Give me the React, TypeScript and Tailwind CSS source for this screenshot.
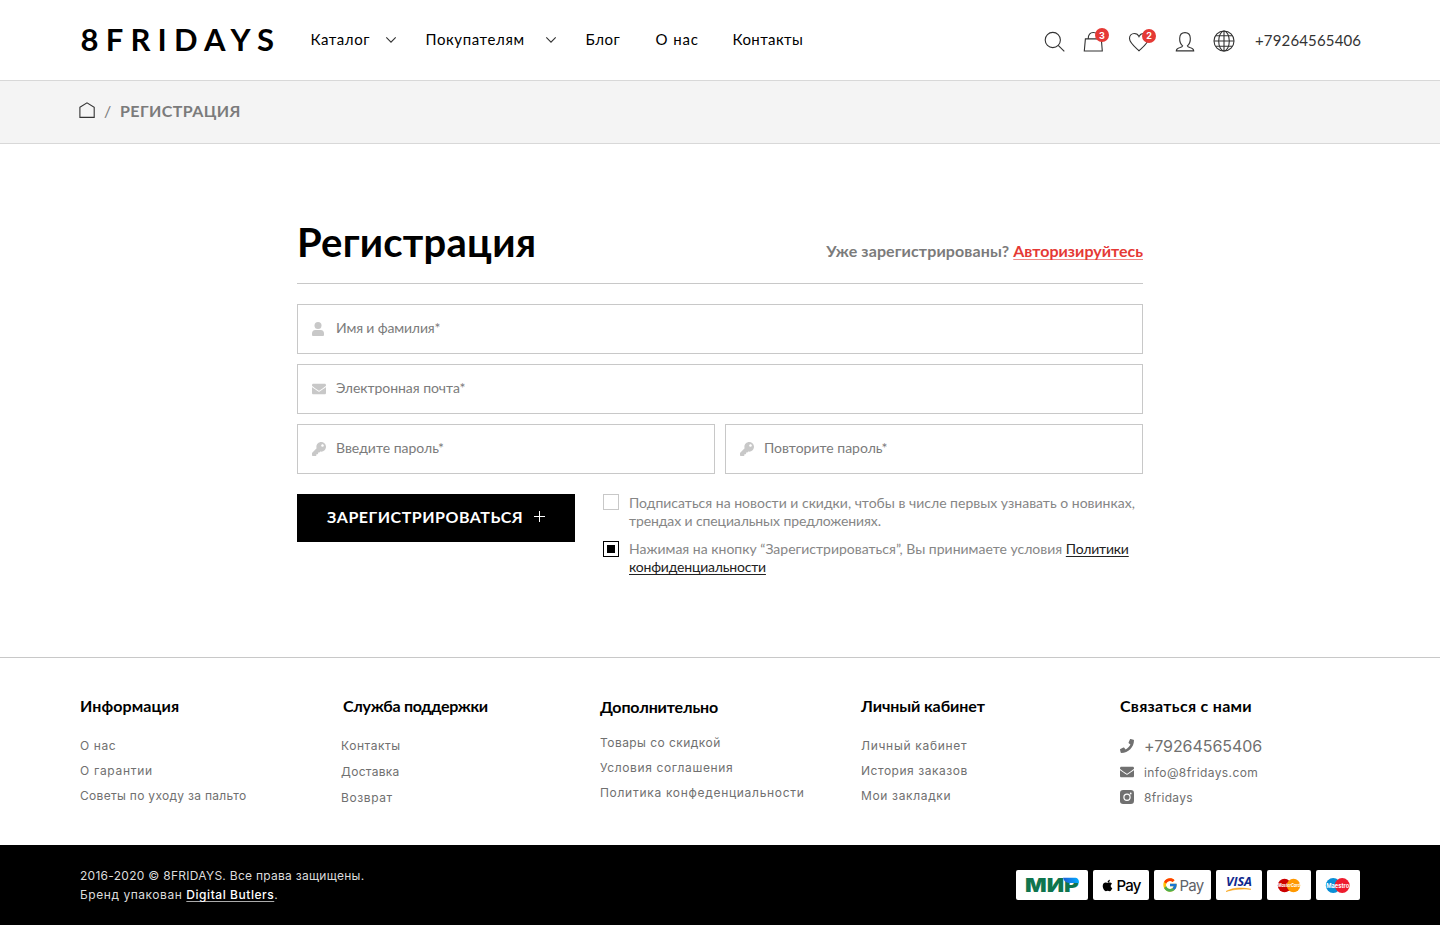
import type { ReactNode } from 'react';
import { FaApple, FaEnvelope, FaKey, FaPhone } from 'react-icons/fa';
import { FcGoogle } from 'react-icons/fc';

function Chevron() {
  return (
    <svg width="12" height="8" viewBox="0 0 12 8" fill="none" stroke="#333" strokeWidth="1.1">
      <path d="M1.3 1.3 6 6.2 10.7 1.3" />
    </svg>
  );
}

function SearchIcon() {
  return (
    <svg width="22" height="22" viewBox="0 0 22 22" fill="none" stroke="#333" strokeWidth="1.1">
      <circle cx="8.8" cy="9" r="7.6" />
      <path d="M14.2 14.4 20.3 20.3" />
    </svg>
  );
}

function BagIcon() {
  return (
    <svg width="22" height="22" viewBox="0 0 22 22" fill="none" stroke="#333" strokeWidth="1.1">
      <path d="M2.400 7.900h15.900l1 12.100H1.300z" />
      <path d="M5.200 7.900C5.200 3.600 7.100 1.500 10.300 1.500s5.100 2.100 5.100 6.400" />
    </svg>
  );
}

function HeartIcon() {
  return (
    <svg width="22" height="22" viewBox="0 0 22 22" fill="none" stroke="#333" strokeWidth="1.1">
      <path d="M11 19.800C7.500 16.600 1.500 12 1.500 7.600 1.500 4.700 3.600 2.500 6.300 2.500 8.400 2.500 10.200 3.700 11 5.600 11.800 3.700 13.600 2.500 15.700 2.500c2.700 0 4.800 2.200 4.800 5.100C20.500 12 14.500 16.600 11 19.800z" />
    </svg>
  );
}

function ProfileIcon() {
  return (
    <svg width="22" height="22" viewBox="0 0 22 22" fill="none" stroke="#333" strokeWidth="1.1">
      <path d="M8.600 14.800C6.700 13.200 5.500 10.400 5.700 7.200 5.800 3.600 7.800 1.600 11 1.600s5.200 2 5.300 5.600c.2 3.200-1 6-2.900 7.600.3.900 1.200 1.300 2.500 1.700 2.300.6 3.700 1.300 3.800 3.400H2.300c.1-2.100 1.500-2.800 3.800-3.400 1.300-.4 2.200-.8 2.500-1.700z" />
    </svg>
  );
}

function GlobeIcon() {
  return (
    <svg width="22" height="22" viewBox="0 0 22 22" fill="none" stroke="#333" strokeWidth="1.1">
      <circle cx="11" cy="11" r="10" />
      <ellipse cx="11" cy="11" rx="5.3" ry="10" />
      <path d="M11 1v20M1 11h20M2.500 5.800h17M2.500 16.200h17" />
    </svg>
  );
}

function HomeIcon() {
  return (
    <svg width="16" height="17" viewBox="0 0 16 17" fill="none" stroke="#333" strokeWidth="1.1">
      <path d="M.9 5.300 8 .900 15.200 5.300V15.400H.9z" />
    </svg>
  );
}

function UserGlyph() {
  return (
    <svg width="12" height="14" viewBox="0 0 12 14" fill="currentColor">
      <circle cx="6" cy="3.5" r="3.5" />
      <path d="M3.200 8h5.600C10.700 8 12 9.300 12 11.200v1.500c0 .8-.5 1.300-1.300 1.300H1.300C.5 14 0 13.500 0 12.700v-1.500C0 9.300 1.300 8 3.200 8z" />
    </svg>
  );
}

function InstagramGlyph() {
  return (
    <svg width="14" height="14" viewBox="0 0 14 14">
      <rect width="14" height="14" rx="3.2" fill="#707070" />
      <circle cx="7" cy="7.2" r="3.1" fill="none" stroke="#fff" strokeWidth="1.2" />
      <circle cx="10.7" cy="3.5" r="0.9" fill="#fff" />
    </svg>
  );
}

function Badge({ children }: { children: ReactNode }) {
  return (
    <span className="flex h-[14px] w-[14px] items-center justify-center rounded-full bg-[#e53935] font-['Inter',sans-serif] text-[9px] leading-none font-bold text-white">
      {children}
    </span>
  );
}

function Field({ icon, label }: { icon: ReactNode; label: ReactNode }) {
  return (
    <div className="flex h-[50px] items-center border border-[#c8c8c8] pl-[14px] text-[14px] leading-[18px] text-[#7b7b7b]">
      <span className="flex w-6 text-[#c8c8c8]">{icon}</span>
      <span className="pb-[2px]">{label}</span>
    </div>
  );
}

function Card({ width, children }: { width: string; children: ReactNode }) {
  return <div className={`flex h-[30px] items-center justify-center rounded-[2px] bg-white ${width}`}>{children}</div>;
}

const underlined = 'underline decoration-1 underline-offset-[2px] [text-decoration-skip-ink:none]';

export default function App() {
  return (
    <div className="flex h-[925px] w-[1440px] flex-col bg-white font-['Lato',sans-serif] text-black">
      <header className="flex h-[81px] items-start border-b border-[#d8d8d8] pl-[80.5px] whitespace-nowrap">
        <a className="mt-[20px] w-[230px] text-[31px] leading-[38px] font-bold tracking-[7.2px]">8FRIDAYS</a>
        <nav className="mt-[29px] flex h-5 items-center text-[15px] leading-5">
          <a className="w-[74.5px] tracking-[0.55px]">Каталог</a>
          <span className="w-[40.5px] pt-[2px]"><Chevron /></span>
          <a className="w-[119.5px] tracking-[0.6px]">Покупателям</a>
          <span className="w-[40.5px] pt-[2px]"><Chevron /></span>
          <a className="w-[70px] tracking-[0.55px]">Блог</a>
          <a className="w-[77px] tracking-[0.9px]">О нас</a>
          <a className="w-[311.5px] tracking-[0.4px]">Контакты</a>
        </nav>
        <div className="mt-[30px] flex h-[22px] items-center text-[#333]">
          <span className="mt-[2px] w-[39px]"><SearchIcon /></span>
          <span className="relative mt-[2px] w-[45px]"><BagIcon /><span className="absolute -top-[3px] left-[12px]"><Badge>3</Badge></span></span>
          <span className="relative mt-[2px] w-[46px]"><HeartIcon /><span className="absolute -top-[2.5px] left-[14px]"><Badge>2</Badge></span></span>
          <span className="mt-[2px] w-[39px]"><ProfileIcon /></span>
          <span className="w-[42px]"><GlobeIcon /></span>
          <span className="pb-px text-[15px] tracking-[0.15px]">+79264565406</span>
        </div>
      </header>

      <div className="flex h-[63px] items-center border-b border-[#d8d8d8] bg-[#f4f4f4] pl-[79px] text-[16px] leading-5 text-[#7b7b7b]">
        <span className="mb-[3px] w-[25px]"><HomeIcon /></span>
        <span className="mb-[2px] w-[16px]">/</span>
        <span className="mb-[2px] font-bold tracking-[0.4px]">РЕГИСТРАЦИЯ</span>
      </div>

      <main className="flex h-[514px] flex-col border-b border-[#c8c8c8] px-[297px] pt-[74px]">
        <div className="flex h-[66px] items-baseline justify-between border-b border-[#c8c8c8]">
          <h1 className="text-[40px] leading-[48px] font-bold tracking-[0.25px]">Регистрация</h1>
          <p className="mb-px pb-px text-[16px] font-bold tracking-[0.12px] text-[#7b7b7b]">
            Уже зарегистрированы?{' '}
            <a className={`tracking-normal text-[#e53935] decoration-[#f08a88] ${underlined}`}>Авторизируйтесь</a>
          </p>
        </div>
        <form className="mt-5 flex flex-col gap-[10px]">
          <Field icon={<UserGlyph />} label={<span className="tracking-[-0.15px]">Имя и фамилия*</span>} />
          <Field icon={<FaEnvelope size={14} />} label={<span className="tracking-[-0.05px]">Электронная почта*</span>} />
          <div className="grid grid-cols-2 gap-[10px]">
            <Field icon={<FaKey size={14} />} label="Введите пароль*" />
            <Field icon={<FaKey size={14} />} label="Повторите пароль*" />
          </div>
        </form>
        <div className="mt-5 flex">
          <button className="flex h-12 w-[278px] items-center bg-black pl-[30px] text-[16px] font-bold whitespace-nowrap text-white">
            <span className="w-[207px] pb-[2px] text-left tracking-[0.52px]">ЗАРЕГИСТРИРОВАТЬСЯ</span>
            <svg width="11" height="11" viewBox="0 0 11 11" stroke="#fff" className="mb-[3px]">
              <path d="M5.5 0v11M0 5.5h11" />
            </svg>
          </button>
          <div className="ml-7 flex flex-col gap-[10px] text-[14px] leading-[18px] whitespace-nowrap text-[#868686]">
            <div className="flex gap-[10px]">
              <span className="h-4 w-4 border border-[#c8c8c8]" />
              <p>
                Подписаться на новости и скидки, чтобы в числе первых узнавать о новинках,<br />
                <span className="tracking-[-0.11px]">трендах и специальных предложениях.</span>
              </p>
            </div>
            <div className="flex gap-[10px]">
              <span className="mt-px flex h-4 w-4 items-center justify-center border border-black">
                <span className="h-2 w-2 bg-black" />
              </span>
              <p>
                Нажимая на кнопку “Зарегистрироваться”, Вы принимаете условия{' '}
                <a className={`tracking-[-0.2px] text-[#222] ${underlined}`}>Политики<br />конфиденциальности</a>
              </p>
            </div>
          </div>
        </div>
      </main>

      <footer className="flex h-[187px] pt-[38px] pl-[80px] text-[16px] leading-5 font-bold whitespace-nowrap">
        <section className="w-[261px]">
          <h2 className="tracking-[0.1px]">Информация</h2>
          <ul className="mt-[17px] font-['Inter',sans-serif] text-[12px] leading-[25px] font-normal text-[#707070]">
            <li className="tracking-[0.6px]">О нас</li>
            <li className="tracking-[0.7px]">О гарантии</li>
            <li className="tracking-[0.3px]">Советы по уходу за пальто</li>
          </ul>
        </section>
        <section className="w-[259px]">
          <h2 className="pl-[2px] tracking-[-0.3px]">Служба поддержки</h2>
          <ul className="mt-[17px] font-['Inter',sans-serif] text-[12px] leading-[26px] font-normal text-[#707070]">
            <li className="tracking-[0.55px]">Контакты</li>
            <li className="tracking-[0.3px]">Доставка</li>
            <li className="tracking-[0.6px]">Возврат</li>
          </ul>
        </section>
        <section className="w-[261px] pt-px">
          <h2 className="tracking-[-0.15px]">Дополнительно</h2>
          <ul className="mt-[13px] font-['Inter',sans-serif] text-[12px] leading-[25px] font-normal text-[#707070]">
            <li className="tracking-[0.45px]">Товары со скидкой</li>
            <li className="tracking-[0.62px]">Условия соглашения</li>
            <li className="tracking-[0.7px]">Политика конфеденциальности</li>
          </ul>
        </section>
        <section className="w-[259px]">
          <h2 className="tracking-[-0.1px]">Личный кабинет</h2>
          <ul className="mt-[17px] font-['Inter',sans-serif] text-[12px] leading-[25px] font-normal text-[#707070]">
            <li className="tracking-[0.7px]">Личный кабинет</li>
            <li className="tracking-[0.53px]">История заказов</li>
            <li className="tracking-[0.65px]">Мои закладки</li>
          </ul>
        </section>
        <section>
          <h2 className="tracking-[0.3px]">Связаться с нами</h2>
          <ul className="mt-[17px] font-['Inter',sans-serif] text-[12px] leading-[26px] font-normal text-[#707070]">
            <li className="flex items-center"><FaPhone size={14} className="mr-[10px]" /><span className="text-[16px] tracking-[-0.05px]">+79264565406</span></li>
            <li className="flex items-center"><FaEnvelope size={14} className="mr-[10px] mb-[2px]" /><span className="pt-px tracking-[0.4px]">info@8fridays.com</span></li>
            <li className="flex h-[24px] items-center"><span className="mr-[10px] mb-[2px]"><InstagramGlyph /></span><span className="tracking-[0.3px]">8fridays</span></li>
          </ul>
        </section>
      </footer>

      <div className="flex h-20 items-center justify-between bg-black px-[80px] font-['Inter',sans-serif] text-[12px] leading-[19px] text-[#dcdcdc]">
        <p>
          <span className="tracking-[0.28px]">2016-2020 © 8FRIDAYS. Все права защищены.</span><br />
          <span className="tracking-[0.55px]">Бренд упакован <a className={`font-medium text-white decoration-[#aaa] ${underlined}`}>Digital Butlers</a>.</span>
        </p>
        <div className="flex gap-[5px]">
          <Card width="w-[72px]">
            <svg width="60" height="28" viewBox="-4 -6 60 28">
              <defs>
                <linearGradient id="mir" x1="0" x2="1">
                  <stop offset="0" stopColor="#1f5cd7" />
                  <stop offset="1" stopColor="#02aeff" />
                </linearGradient>
              </defs>
              <text x="-1" y="15" textLength="54" lengthAdjust="spacingAndGlyphs" fontFamily="Inter, sans-serif" fontWeight="900" fontSize="19" fill="#0f754e">МИР</text>
              <path d="M37 .8H48.500c3.300 0 4.800 2 4.200 5.200H43c-3 0-5.200-2-6-5.200z" fill="url(#mir)" />
            </svg>
          </Card>
          <Card width="w-[56px]">
            <FaApple size={13} color="#000" />
            <span className="ml-[2px] text-[15px] font-medium tracking-[-0.8px] text-black">Pay</span>
          </Card>
          <Card width="w-[57px]">
            <FcGoogle size={16} />
            <span className="ml-[2px] text-[15px] tracking-[-0.8px] text-[#5f6368]">Pay</span>
          </Card>
          <Card width="w-[46px]">
            <svg width="36" height="26" viewBox="-4 -5 36 26">
              <text x="1" y="9" textLength="26" lengthAdjust="spacingAndGlyphs" fontFamily="Open Sans, sans-serif" fontWeight="700" fontStyle="italic" fontSize="12" fill="#10298e">VISA</text>
              <path d="M1 14.500C8 10.500 16 10.300 26 12.300 17 11.500 9 12 1 14.500z" fill="#f9a51a" stroke="#f9a51a" strokeWidth=".6" />
            </svg>
          </Card>
          <Card width="w-[44px]">
            <svg width="36" height="26" viewBox="-6 -5 36 26">
              <circle cx="7.5" cy="8.5" r="6.7" fill="#cc0000" />
              <circle cx="16.5" cy="8.5" r="6.7" fill="#ff9900" />
              <text x="1" y="10.3" textLength="22" lengthAdjust="spacingAndGlyphs" fontFamily="Inter, sans-serif" fontWeight="700" fontStyle="italic" fontSize="5" fill="#fff">MasterCard</text>
            </svg>
          </Card>
          <Card width="w-[44px]">
            <svg width="36" height="26" viewBox="-5 -5 36 26">
              <circle cx="8.2" cy="8.5" r="7.4" fill="#0a8fd6" />
              <circle cx="17.2" cy="8.5" r="7.4" fill="#ee1c2e" />
              <text x="1.2" y="10.8" textLength="23" lengthAdjust="spacingAndGlyphs" fontFamily="Inter, sans-serif" fontWeight="700" fontSize="6.5" fill="#fff">Maestro</text>
            </svg>
          </Card>
        </div>
      </div>
    </div>
  );
}
